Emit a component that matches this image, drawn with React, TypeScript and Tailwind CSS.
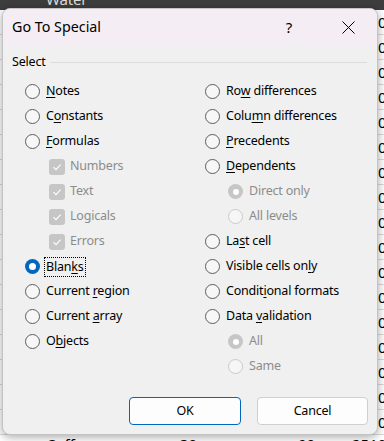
import React from 'react';

const font = { fontFamily: '"Noto Sans", "Open Sans", sans-serif' };

// Label with one underlined access key
const Label = ({ text, k }: { text: string; k?: number }) => {
  if (k === undefined) return <span>{text}</span>;
  return (
    <span>
      {text.slice(0, k)}
      <span className="underline underline-offset-2">{text[k]}</span>
      {text.slice(k + 1)}
    </span>
  );
};

const Radio = ({ state }: { state: 'off' | 'on' | 'disOn' | 'disOff' }) => {
  if (state === 'on')
    return (
      <span className="w-[15px] h-[15px] rounded-full bg-[#0067c0] flex items-center justify-center shrink-0">
        <span className="w-[7px] h-[7px] rounded-full bg-white" />
      </span>
    );
  if (state === 'disOn')
    return (
      <span className="w-[15px] h-[15px] rounded-full bg-[#c6c6c6] flex items-center justify-center shrink-0">
        <span className="w-[6px] h-[6px] rounded-full bg-white" />
      </span>
    );
  if (state === 'disOff')
    return <span className="w-[15px] h-[15px] rounded-full border border-[#cacaca] bg-[#f6f6f6] shrink-0" />;
  return <span className="w-[15px] h-[15px] rounded-full border border-[#5d5d5d] bg-[#f7f7f7] shrink-0" />;
};

const Check = () => (
  <span className="w-[16px] h-[16px] rounded-[3px] bg-[#c6c6c6] flex items-center justify-center shrink-0">
    <svg width="10" height="10" viewBox="0 0 10 10" fill="none">
      <path d="M1.5 5.2 L4 7.6 L8.6 2.6" stroke="white" strokeWidth="1.1" />
    </svg>
  </span>
);

type Row = { text: string; k?: number; kind: 'radio' | 'check' | 'sub'; state?: 'off' | 'on' | 'disOn' | 'disOff'; focus?: boolean };

const left: Row[] = [
  { text: 'Notes', k: 0, kind: 'radio' },
  { text: 'Constants', k: 1, kind: 'radio' },
  { text: 'Formulas', k: 0, kind: 'radio' },
  { text: 'Numbers', kind: 'check' },
  { text: 'Text', kind: 'check' },
  { text: 'Logicals', kind: 'check' },
  { text: 'Errors', kind: 'check' },
  { text: 'Blanks', k: 4, kind: 'radio', state: 'on', focus: true },
  { text: 'Current region', k: 8, kind: 'radio' },
  { text: 'Current array', k: 8, kind: 'radio' },
  { text: 'Objects', k: 1, kind: 'radio' },
];

const right: Row[] = [
  { text: 'Row differences', k: 2, kind: 'radio' },
  { text: 'Column differences', k: 4, kind: 'radio' },
  { text: 'Precedents', k: 0, kind: 'radio' },
  { text: 'Dependents', k: 0, kind: 'radio' },
  { text: 'Direct only', kind: 'sub', state: 'disOn' },
  { text: 'All levels', kind: 'sub', state: 'disOff' },
  { text: 'Last cell', k: 2, kind: 'radio' },
  { text: 'Visible cells only', k: 16, kind: 'radio' },
  { text: 'Conditional formats', k: 6, kind: 'radio' },
  { text: 'Data validation', k: 5, kind: 'radio' },
  { text: 'All', kind: 'sub', state: 'disOn' },
  { text: 'Same', kind: 'sub', state: 'disOff' },
];

const Item = ({ r }: { r: Row }) => {
  if (r.kind === 'check')
    return (
      <div className="h-[25px] flex items-center gap-[5px] pl-[24px] text-[#8c8c8c]">
        <Check />
        <Label text={r.text} />
      </div>
    );
  if (r.kind === 'sub')
    return (
      <div className="h-[25px] flex items-center gap-[6px] pl-[23px] text-[#8c8c8c]">
        <Radio state={r.state!} />
        <Label text={r.text} />
      </div>
    );
  return (
    <div className="h-[25px] flex items-center gap-[6px] text-black">
      <Radio state={r.state ?? 'off'} />
      <span className={r.focus ? 'outline outline-1 outline-dotted outline-black px-[1px] -ml-[1px] leading-[18px]' : ''}>
        <Label text={r.text} k={r.k} />
      </span>
    </div>
  );
};

const sheetRows = Array.from({ length: 17 });

export default function App() {
  return (
    <div className="relative w-[384px] h-[441px] overflow-hidden bg-white text-[12.5px] tracking-[-0.2px]" style={font}>
      {/* spreadsheet behind the dialog */}
      <div className="h-[10px] bg-[#3d3d3d] text-[#dcdcdc] text-[15px] leading-[10px] pl-[46px] overflow-hidden">
        <span className="relative -top-[6px]">Water</span>
      </div>
      <div className="flex flex-col">
        {sheetRows.map((_, i) => (
          <div key={i} className="h-[25px] border-b border-[#dadada] flex justify-end text-[15px] text-black">
            <span className="w-[6px] overflow-hidden leading-[25px]">0</span>
          </div>
        ))}
      </div>

      {/* dialog */}
      <div className="absolute left-[2px] top-[8px] w-[376px] h-[427px] rounded-[8px] bg-[#f0f0f0] shadow-[0_2px_10px_rgba(0,0,0,0.35)] border border-[#c4c4c4] overflow-hidden flex flex-col">
        <div className="h-[36px] bg-[#f4eef4] flex items-center pl-[9px] shrink-0 tracking-normal">
          <span className="text-[14.3px] text-black flex-1">Go To Special</span>
          <span className="w-[16px] text-center text-[15px] text-black mr-[45px]">?</span>
          <svg width="13" height="13" viewBox="0 0 13 13" className="mr-[22px]">
            <path d="M0.5 0.5 L12.5 12.5 M12.5 0.5 L0.5 12.5" stroke="black" strokeWidth="1" />
          </svg>
        </div>
        <div className="flex items-center h-[34px] pl-[9px] pr-[10px]">
          <span className="text-black">Select</span>
          <span className="flex-1 h-px bg-[#dcdcdc] ml-[4px]" />
        </div>
        <div className="flex">
          <div className="w-[202px] pl-[22px] flex flex-col">
            {left.map((r) => (
              <Item key={r.text} r={r} />
            ))}
          </div>
          <div className="flex flex-col">
            {right.map((r, i) => (
              <Item key={r.text + i} r={r} />
            ))}
          </div>
        </div>
        <div className="flex gap-[16px] pl-[126px] mt-[18px]">
          <button className="w-[112px] h-[28px] rounded-[4px] bg-[#fdfdfd] border border-[#0067c0] text-black">OK</button>
          <button className="w-[111px] h-[28px] rounded-[4px] bg-[#fdfdfd] border border-[#d0d0d0] text-black">Cancel</button>
        </div>
      </div>

      {/* bottom sheet row peeking out */}
      <div className="absolute left-0 top-[434px] w-[384px] h-[7px] overflow-hidden text-[15px] leading-[20px] text-black tracking-normal">
        <span className="absolute left-[46px] top-0">Coffee</span>
        <span className="absolute left-[180px] top-0">30</span>
        <span className="absolute left-[298px] top-0">99</span>
        <span className="absolute left-[352px] top-0">2510</span>
      </div>
    </div>
  );
}
